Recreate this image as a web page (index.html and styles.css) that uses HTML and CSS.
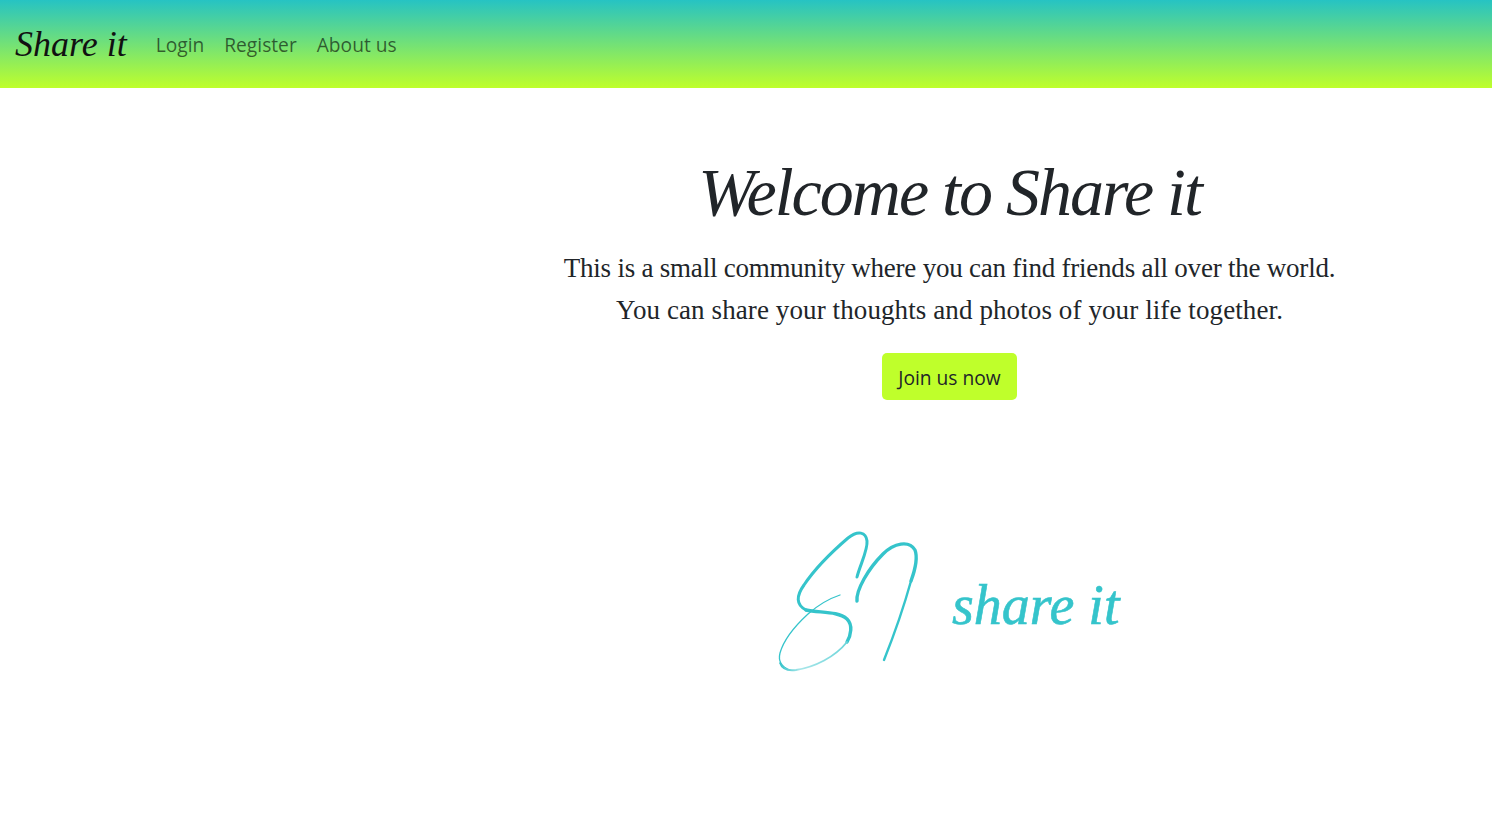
FILE: index.html
```html
<!DOCTYPE html>
<html lang="en">
<head>
<meta charset="utf-8">
<title>Share it</title>
<link rel="stylesheet" href="styles.css">
</head>
<body>
<nav class="navbar">
  <a class="brand" href="#">Share it</a>
  <ul class="nav-links">
    <li><a href="#">Login</a></li>
    <li><a href="#">Register</a></li>
    <li><a href="#">About us</a></li>
  </ul>
</nav>
<main class="hero">
  <h1 class="title">Welcome to Share it</h1>
  <p class="lead"><span class="line-one">This is a small community where you can find friends all over the world.</span><span class="line-two">You can share your thoughts and photos of your life together.</span></p>
  <a class="join" href="#">Join us now</a>
  <svg class="logo" viewBox="0 0 380 170" width="380" height="170" role="img" aria-label="Share it logo">
    <defs>
      <linearGradient id="fade" x1="0" y1="0" x2="1" y2="0">
        <stop offset="0" stop-color="#35c4cb"/>
        <stop offset="0.3" stop-color="#a8e6e9"/>
        <stop offset="1" stop-color="#6dd5da"/>
      </linearGradient>
    </defs>
    <g fill="none" stroke="#35c4cb" stroke-linecap="round" stroke-linejoin="round">
      <path stroke-width="3" d="M97 62C100 50 108 35 107 26C106 17 98 15 88 23C74 35 56 52 44 70C36 81 36 90 46 95"/>
      <path stroke-width="3.4" d="M46 95C60 98 78 96 87 104C93 110 91 120 87 127"/>
      <path stroke-width="1.3" d="M80 80C68 84 57 91 48 99C36 110 24 124 20 138C18 146 22 152 30 155"/>
      <path stroke-width="1.8" stroke="url(#fade)" d="M20 148C22 154 28 156 36 155C55 152 75 142 87 127"/>
      <path stroke-width="3.4" d="M97 86C96 75 108 54 123 39C134 28 149 25 155 35C158 43 155 55 151 66"/>
      <path stroke-width="2.4" d="M151 66C146 84 134 120 124 145"/>
    </g>
    <text class="logo-word" x="192" y="109">share it</text>
  </svg>
</main>
</body>
</html>
```
FILE: styles.css
```css
* {
  box-sizing: border-box;
}

html,
body {
  margin: 0;
  padding: 0;
  height: 100%;
  background: #fff;
  overflow: hidden;
}

body {
  font-family: "Open Sans", "Noto Sans", sans-serif;
  color: #212529;
}

.navbar {
  display: flex;
  align-items: center;
  height: 88px;
  padding: 0 15px;
  background: linear-gradient(180deg, #26c3c3 0%, #bfff2b 100%);
}

.brand {
  font-family: "Liberation Serif", serif;
  font-style: italic;
  font-size: 36px;
  line-height: 48px;
  color: #111;
  text-decoration: none;
  margin-right: 29px;
  white-space: nowrap;
}

.nav-links {
  display: flex;
  gap: 20px;
  list-style: none;
  margin: 0;
  padding: 0;
}

.nav-links a {
  font-size: 19.2px;
  color: rgba(0, 0, 0, 0.6);
  text-decoration: none;
}

.hero {
  display: flex;
  flex-direction: column;
  align-items: center;
  margin-left: 407px;
  padding-top: 62px;
  text-align: center;
}

.title {
  margin: 0;
  font-family: "Liberation Serif", serif;
  font-style: italic;
  font-weight: 400;
  font-size: 68px;
  letter-spacing: -2px;
  line-height: 84px;
}

.lead {
  margin: 13px 0 0;
  font-family: "Liberation Serif", serif;
  font-size: 27px;
  line-height: 42px;
  color: #212529;
}

.line-one,
.line-two {
  display: block;
}

.line-one {
  letter-spacing: -0.22px;
}

.line-two {
  letter-spacing: 0.1px;
}

.join {
  margin-top: 22px;
  width: 135px;
  height: 47px;
  line-height: 50px;
  border-radius: 5px;
  background: #bfff2b;
  color: #212529;
  font-size: 19.2px;
  text-decoration: none;
}

.logo {
  display: block;
  margin-top: 115px;
  margin-left: 1px;
}

.logo-word {
  font-family: "Liberation Serif", serif;
  font-style: italic;
  font-size: 56px;
  fill: #35c4cb;
  stroke: #35c4cb;
  stroke-width: 0.6px;
}
```
